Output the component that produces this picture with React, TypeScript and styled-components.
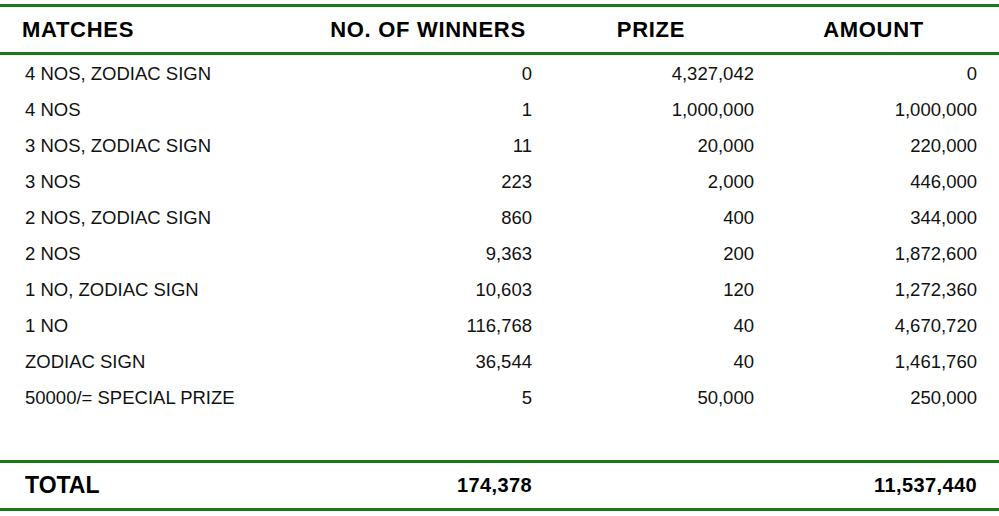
import styled, { createGlobalStyle } from 'styled-components';

const GlobalStyle = createGlobalStyle`
  html, body {
    margin: 0;
    padding: 0;
    background: #ffffff;
  }
  body {
    font-family: "Liberation Sans", Arial, sans-serif;
    color: #111111;
  }
`;

const Page = styled.div`
  width: 999px;
  padding-top: 4px;
`;

const Row = styled.div<{ height: number }>`
  display: grid;
  grid-template-columns: 316px 224px 222px 223px;
  align-items: center;
  height: ${(props) => props.height}px;
`;

const HeaderRow = styled(Row)`
  border-top: 3px solid #1a7a1a;
  border-bottom: 3px solid #1a7a1a;
`;

const TotalRow = styled(Row)`
  margin-top: 44px;
  border-top: 3px solid #1a7a1a;
  border-bottom: 3px solid #1a7a1a;
`;

const BodyRows = styled.div`
  padding-top: 1px;
`;

const HeadCell = styled.div<{ first?: boolean }>`
  font-size: 22px;
  font-weight: bold;
  letter-spacing: 0.7px;
  color: #000000;
  text-align: ${(props) => (props.first ? 'left' : 'center')};
  padding-left: ${(props) => (props.first ? '22px' : '0')};
`;

const Cell = styled.div<{ first?: boolean }>`
  font-size: 18.5px;
  text-align: ${(props) => (props.first ? 'left' : 'right')};
  padding: ${(props) => (props.first ? '0 0 0 25px' : '0 8px 0 0')};
`;

const TotalLabel = styled.div`
  font-size: 23px;
  font-weight: bold;
  color: #000000;
  padding-left: 25px;
`;

const TotalValue = styled.div`
  font-size: 20px;
  font-weight: bold;
  letter-spacing: 0.4px;
  color: #000000;
  text-align: right;
  padding-right: 8px;
`;

const rows = [
  ['4 NOS, ZODIAC SIGN', '0', '4,327,042', '0'],
  ['4 NOS', '1', '1,000,000', '1,000,000'],
  ['3 NOS, ZODIAC SIGN', '11', '20,000', '220,000'],
  ['3 NOS', '223', '2,000', '446,000'],
  ['2 NOS, ZODIAC SIGN', '860', '400', '344,000'],
  ['2 NOS', '9,363', '200', '1,872,600'],
  ['1 NO, ZODIAC SIGN', '10,603', '120', '1,272,360'],
  ['1 NO', '116,768', '40', '4,670,720'],
  ['ZODIAC SIGN', '36,544', '40', '1,461,760'],
  ['50000/= SPECIAL PRIZE', '5', '50,000', '250,000'],
];

export default function App() {
  return (
    <Page>
      <GlobalStyle />
      <HeaderRow height={45}>
        <HeadCell first>MATCHES</HeadCell>
        <HeadCell>NO. OF WINNERS</HeadCell>
        <HeadCell>PRIZE</HeadCell>
        <HeadCell>AMOUNT</HeadCell>
      </HeaderRow>
      <BodyRows>
        {rows.map((row, index) => (
          <Row key={index} height={36}>
            {row.map((value, i) => (
              <Cell key={i} first={i === 0}>
                {value}
              </Cell>
            ))}
          </Row>
        ))}
      </BodyRows>
      <TotalRow height={45}>
        <TotalLabel>TOTAL</TotalLabel>
        <TotalValue>174,378</TotalValue>
        <div />
        <TotalValue>11,537,440</TotalValue>
      </TotalRow>
    </Page>
  );
}
